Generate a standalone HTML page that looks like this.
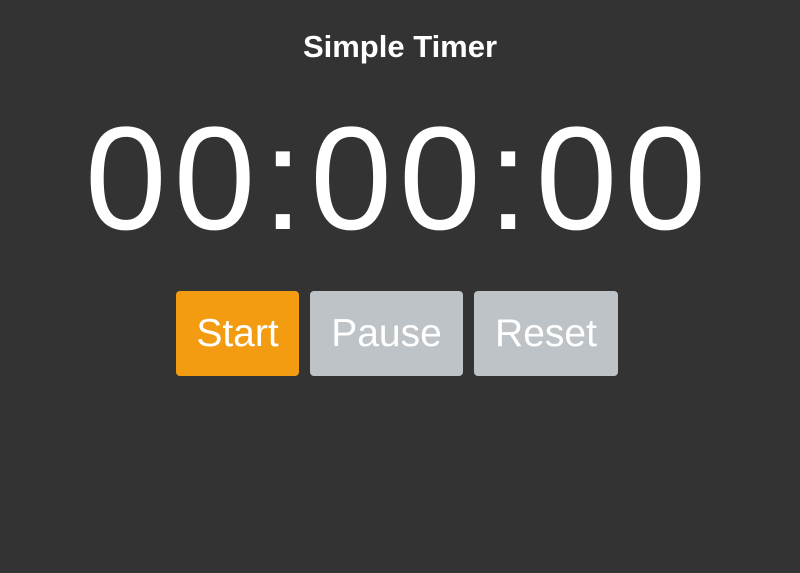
<!DOCTYPE html>
<html><head><style>
html,body{margin:0;padding:0;background:#333;width:800px;height:573px;overflow:hidden;font-family:"Liberation Sans",Arial,sans-serif;color:#fff}
h1{position:absolute;top:29px;left:0;width:800px;text-align:center;margin:0;font-size:31px;font-weight:bold;line-height:36px}
.t{position:absolute;top:94px;left:0;width:800px;text-align:center;font-size:147px;line-height:170px;letter-spacing:7px;padding-right:2px;box-sizing:border-box}
.b{position:absolute;top:291px;height:85px;border-radius:4px;font-size:39px;line-height:85px;text-align:center;color:#fff}
</style></head><body>
<h1>Simple Timer</h1>
<div class="t">00:00:00</div>
<div class="b" style="left:176px;width:123px;background:#f39c12">Start</div>
<div class="b" style="left:310px;width:153px;background:#bdc3c7">Pause</div>
<div class="b" style="left:474px;width:144px;background:#bdc3c7">Reset</div>
</body></html>
